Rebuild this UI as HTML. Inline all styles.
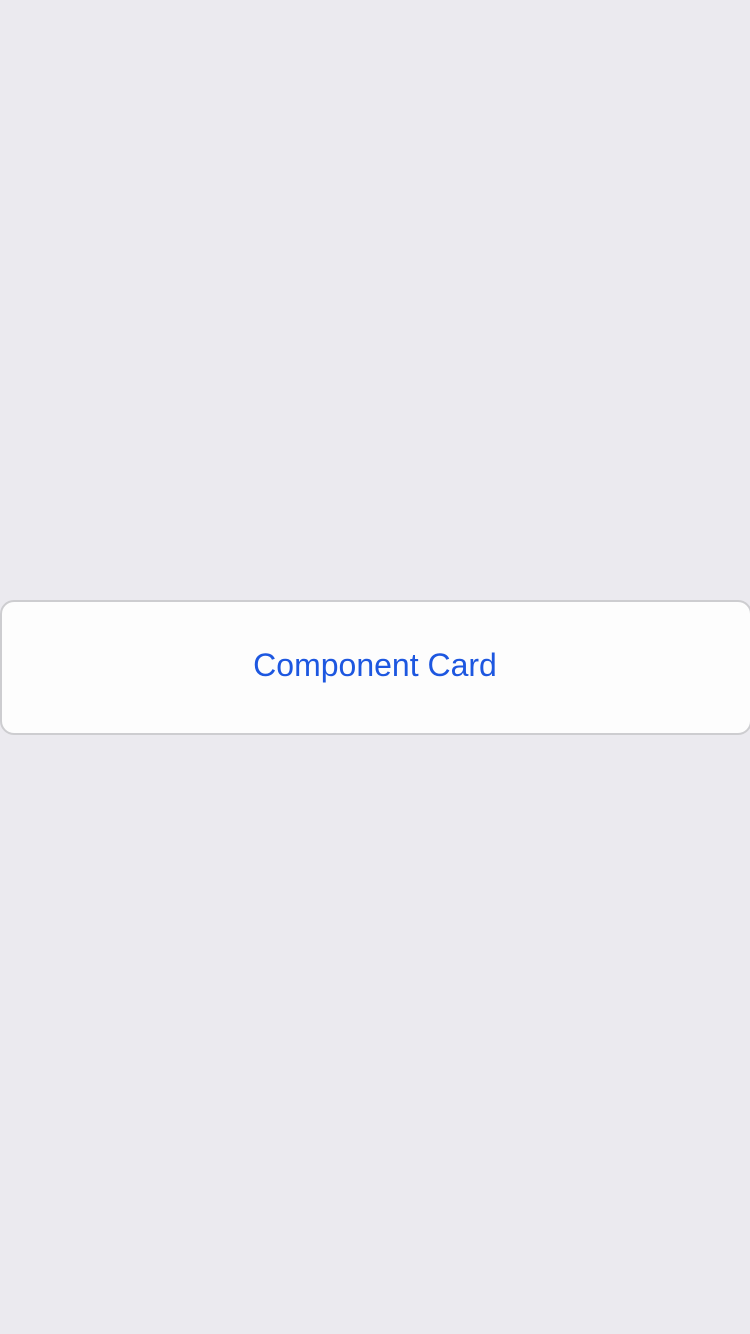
<!DOCTYPE html>
<html><head><style>
html,body{margin:0;padding:0;width:750px;height:1334px;background:#ebeaef;overflow:hidden}
.card{position:absolute;left:0;top:600px;width:748px;height:131px;border:2px solid #cdcdd0;border-radius:14px;background:#fdfdfd;display:flex;align-items:center;justify-content:center;font-family:"Liberation Sans",sans-serif;font-size:32px;color:#1d57e0}
.card span{position:relative;top:-2px;left:-1px}
</style></head><body>
<div class="card"><span>Component Card</span></div>
</body></html>
